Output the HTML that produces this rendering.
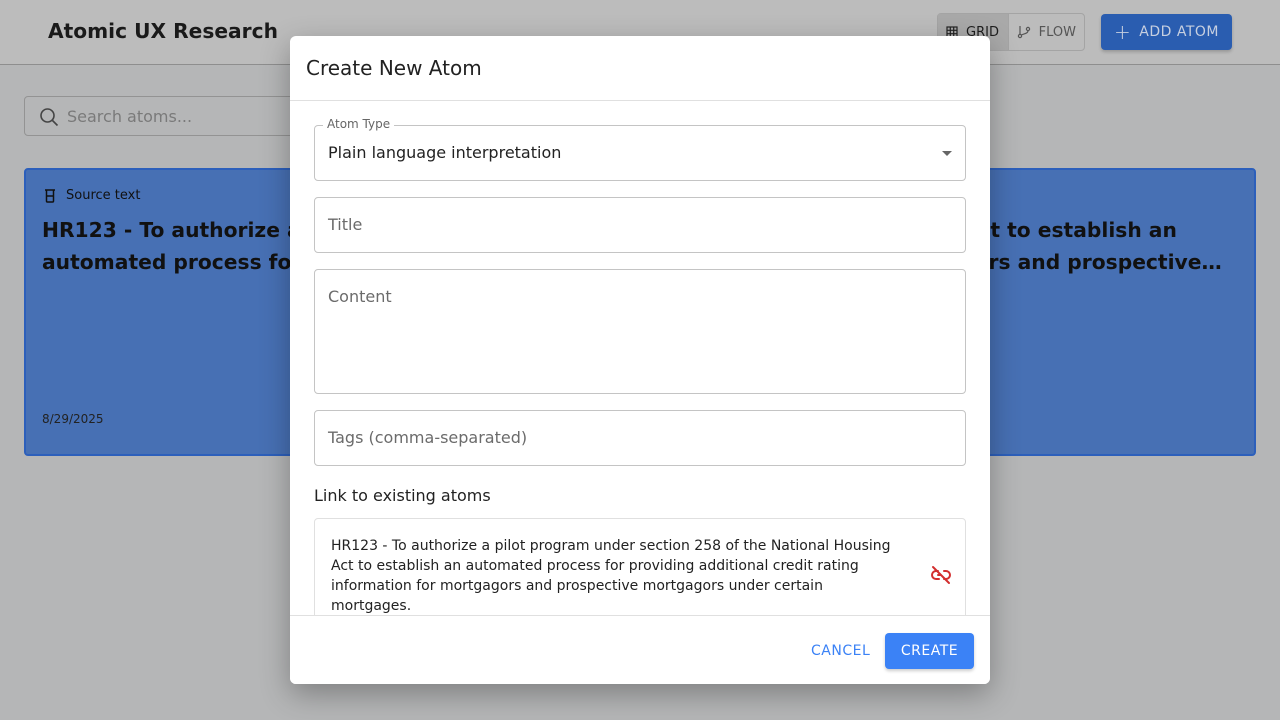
<!DOCTYPE html>
<html><head><style>
*{box-sizing:border-box;margin:0;padding:0}
body{width:1280px;height:720px;overflow:hidden;background:#b5b6b7;font-family:"DejaVu Sans","Liberation Sans",sans-serif;position:relative}
.hdr{position:absolute;left:0;top:0;width:1280px;height:65px;background:#bcbcbc;border-bottom:1px solid #8e8e8e}
.hdr h1{position:absolute;left:48px;top:19px;font-size:20.2px;font-weight:bold;color:#1a1a1a}
.tog{position:absolute;left:937px;top:13px;width:148px;height:38px;border:1px solid #a4a4a4;border-radius:4px;display:flex;font-size:13px;color:#555}
.tog div{display:flex;align-items:center;gap:8px;padding:0 8px}
.tog .on{background:#a9a9a9;color:#1e1e1e;width:71px;border-right:1px solid #a4a4a4}
.add{position:absolute;left:1101px;top:14px;width:131px;height:36px;background:#2a5db0;border-radius:4px;color:#c6cfe0;font-size:14px;letter-spacing:.5px;display:flex;align-items:center;justify-content:center;gap:8px;box-shadow:0 2px 3px rgba(0,0,0,.2)}
.search{position:absolute;left:24px;top:96px;width:300px;height:40px;border:1px solid #939393;border-radius:4px;font-size:16px;color:#7a7a7a;padding:10px 0 0 42px}
.card{position:absolute;left:24px;top:168px;width:1232px;height:288px;background:#4770b4;border:2px solid #2c5fbb;border-radius:4px}
.card .lbl{position:absolute;left:40px;top:18px;font-size:13px;color:#111}
.card .t{position:absolute;left:16px;top:44px;font-size:20.25px;font-weight:bold;color:#111;line-height:32px;width:1200px}
.card .d{position:absolute;left:16px;top:242px;font-size:12px;color:#222}
.modal{position:absolute;left:290px;top:36px;width:700px;height:648px;background:#fff;border-radius:6px;box-shadow:0 10px 30px rgba(0,0,0,.3);overflow:hidden}
.mh{height:65px;border-bottom:1px solid #e0e0e0;font-size:20px;color:#222;padding:20px 16px}
.f{position:absolute;left:24px;width:652px;border:1px solid #c4c4c4;border-radius:4px;font-size:16px;color:#6b6b6b;padding:0 13px}
.ft{position:absolute;left:0;top:579px;width:700px;height:69px;border-top:1px solid #e0e0e0;background:#fff}
</style></head><body>
<div class="hdr"><h1>Atomic UX Research</h1>
<div class="tog"><div class="on"><svg width="12" height="12" viewBox="0 0 12 12" fill="none" stroke="#222" stroke-width="1.2"><rect x="1" y="1" width="10" height="10"/><path d="M4.3 1v10M7.7 1v10M1 4.3h10M1 7.7h10"/></svg>GRID</div><div><svg width="14" height="14" viewBox="0 0 14 14" fill="none" stroke="#555" stroke-width="1.2"><circle cx="3" cy="11" r="1.6"/><circle cx="11" cy="4" r="1.6"/><path d="M3 1v8.4M11 5.6c0 3-4 3-7 4.5"/></svg>FLOW</div></div>
<div class="add"><span style="font-size:20px;font-weight:300">+</span>ADD ATOM</div></div>
<div class="search"><svg style="position:absolute;left:14px;top:10px" width="20" height="20" viewBox="0 0 20 20" fill="none" stroke="#444" stroke-width="1.6"><circle cx="8.5" cy="8.5" r="6.5"/><path d="M13.5 13.5l5 5"/></svg>Search atoms...</div>
<div class="card"><svg style="position:absolute;left:18px;top:19px" width="12" height="15" viewBox="0 0 12 15" fill="none" stroke="#111" stroke-width="1.5"><path d="M1 1h10M2.5 1v11a1 1 0 001 1h5a1 1 0 001-1V1M2.5 7h7"/></svg><div class="lbl">Source text</div>
<div class="t">HR123 - To authorize a pilot program under section 258 of the National Housing Act to establish an automated process for providing additional credit rating information for mortgagors and prospective…</div>
<div class="d">8/29/2025</div></div>
<div class="modal">
<div class="mh">Create New Atom</div>
<div class="f" style="top:89px;height:56px;color:#222;padding-top:17px">Plain language interpretation<span style="position:absolute;left:-1px;top:-9px;background:#fff;padding:0 4px;margin-left:9px;font-size:12px;color:#666">Atom Type</span><span style="position:absolute;right:13px;top:25px;border:5px solid transparent;border-top-color:#666;border-bottom:0"></span></div>
<div class="f" style="top:161px;height:56px;padding-top:17px">Title</div>
<div class="f" style="top:233px;height:125px;padding-top:17px">Content</div>
<div class="f" style="top:374px;height:56px;padding-top:17px">Tags (comma-separated)</div>
<div style="position:absolute;left:24px;top:450px;font-size:16px;color:#222">Link to existing atoms</div>
<div style="position:absolute;left:24px;top:482px;width:652px;height:110px;border:1px solid #e0e0e0;border-radius:4px;padding:17px 16px;font-size:14px;color:#222;line-height:20px"><div style="width:572px">HR123 - To authorize a pilot program under section 258 of the National Housing Act to establish an automated process for providing additional credit rating information for mortgagors and prospective mortgagors under certain mortgages.</div>
<svg style="position:absolute;left:615px;top:46px" width="22" height="20" viewBox="0 0 22 20" fill="none" stroke="#d32f2f" stroke-width="2" stroke-linecap="round"><path d="M8 6H6a4 4 0 000 8h3M14 6h2a4 4 0 010 8h-2M8 10h2M3 2l16 16"/></svg></div>
<div class="ft"><span style="position:absolute;left:521px;top:27px;font-size:14px;color:#3b82f6;letter-spacing:.5px">CANCEL</span>
<div style="position:absolute;left:595px;top:17px;width:89px;height:36px;background:#3b82f6;border-radius:4px;color:#fff;font-size:14px;letter-spacing:.5px;text-align:center;line-height:36px;box-shadow:0 2px 3px rgba(0,0,0,.2)">CREATE</div></div>
</div>
</body></html>
